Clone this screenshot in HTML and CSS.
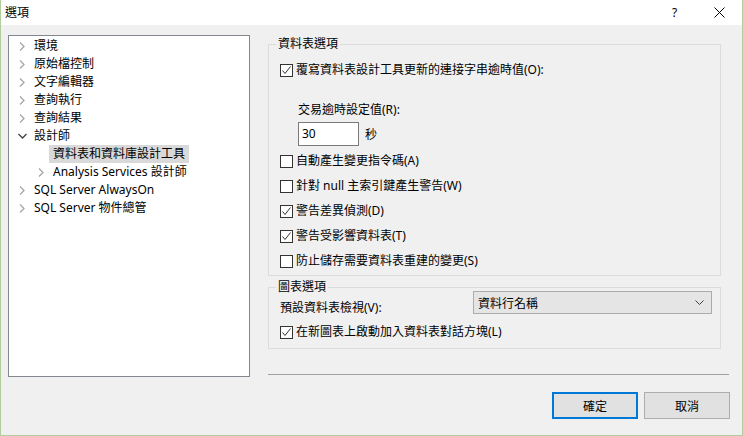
FILE: index.html
```html
<!DOCTYPE html>
<html lang="zh-Hant">
<head>
    <meta charset="UTF-8">
    <title>選項</title>
    <link rel="stylesheet" href="styles.css">
</head>
<body>
<div class="window">
    <div class="titlebar">
        <div class="title">選項</div>
        <div class="caption-btn help">?</div>
        <div class="caption-btn close">
            <svg width="11" height="11" viewBox="0 0 11 11"><path d="M0.5 0.5 L10.5 10.5 M10.5 0.5 L0.5 10.5" stroke="#000" stroke-width="1" fill="none"/></svg>
        </div>
    </div>

    <div class="main">
        <div class="tree">
            <div class="node"><span class="twisty"><svg width="6" height="9" viewBox="0 0 6 9"><path d="M1 0.5 L5 4.5 L1 8.5" stroke="#a6a6a6" stroke-width="1.3" fill="none"/></svg></span><span class="label">環境</span></div>
            <div class="node"><span class="twisty"><svg width="6" height="9" viewBox="0 0 6 9"><path d="M1 0.5 L5 4.5 L1 8.5" stroke="#a6a6a6" stroke-width="1.3" fill="none"/></svg></span><span class="label">原始檔控制</span></div>
            <div class="node"><span class="twisty"><svg width="6" height="9" viewBox="0 0 6 9"><path d="M1 0.5 L5 4.5 L1 8.5" stroke="#a6a6a6" stroke-width="1.3" fill="none"/></svg></span><span class="label">文字編輯器</span></div>
            <div class="node"><span class="twisty"><svg width="6" height="9" viewBox="0 0 6 9"><path d="M1 0.5 L5 4.5 L1 8.5" stroke="#a6a6a6" stroke-width="1.3" fill="none"/></svg></span><span class="label">查詢執行</span></div>
            <div class="node"><span class="twisty"><svg width="6" height="9" viewBox="0 0 6 9"><path d="M1 0.5 L5 4.5 L1 8.5" stroke="#a6a6a6" stroke-width="1.3" fill="none"/></svg></span><span class="label">查詢結果</span></div>
            <div class="node"><span class="twisty"><svg width="9" height="6" viewBox="0 0 9 6"><path d="M0.5 1 L4.5 5 L8.5 1" stroke="#404040" stroke-width="1.3" fill="none"/></svg></span><span class="label">設計師</span></div>
            <div class="node child"><span class="twisty"></span><span class="label selected">資料表和資料庫設計工具</span></div>
            <div class="node child"><span class="twisty"><svg width="6" height="9" viewBox="0 0 6 9"><path d="M1 0.5 L5 4.5 L1 8.5" stroke="#a6a6a6" stroke-width="1.3" fill="none"/></svg></span><span class="label">Analysis Services 設計師</span></div>
            <div class="node"><span class="twisty"><svg width="6" height="9" viewBox="0 0 6 9"><path d="M1 0.5 L5 4.5 L1 8.5" stroke="#a6a6a6" stroke-width="1.3" fill="none"/></svg></span><span class="label">SQL Server AlwaysOn</span></div>
            <div class="node"><span class="twisty"><svg width="6" height="9" viewBox="0 0 6 9"><path d="M1 0.5 L5 4.5 L1 8.5" stroke="#a6a6a6" stroke-width="1.3" fill="none"/></svg></span><span class="label">SQL Server 物件總管</span></div>
        </div>

        <div class="panel">
            <fieldset class="group group-table">
                <legend>資料表選項</legend>
                <div class="check first">
                    <span class="box checked"><svg width="11" height="11" viewBox="0 0 11 11"><path d="M1.5 5.5 L4 8.5 L9.5 1.5" stroke="#333" stroke-width="1" fill="none"/></svg></span>
                    <span>覆寫資料表設計工具更新的連接字串逾時值(O):</span>
                </div>
                <div class="timeout-label">交易逾時設定值(R):</div>
                <div class="timeout-row">
                    <div class="textbox">30</div>
                    <span class="unit">秒</span>
                </div>
                <div class="check after-input">
                    <span class="box"></span>
                    <span>自動產生變更指令碼(A)</span>
                </div>
                <div class="check">
                    <span class="box"></span>
                    <span>針對 null 主索引鍵產生警告(W)</span>
                </div>
                <div class="check">
                    <span class="box checked"><svg width="11" height="11" viewBox="0 0 11 11"><path d="M1.5 5.5 L4 8.5 L9.5 1.5" stroke="#333" stroke-width="1" fill="none"/></svg></span>
                    <span>警告差異偵測(D)</span>
                </div>
                <div class="check">
                    <span class="box checked"><svg width="11" height="11" viewBox="0 0 11 11"><path d="M1.5 5.5 L4 8.5 L9.5 1.5" stroke="#333" stroke-width="1" fill="none"/></svg></span>
                    <span>警告受影響資料表(T)</span>
                </div>
                <div class="check last">
                    <span class="box"></span>
                    <span>防止儲存需要資料表重建的變更(S)</span>
                </div>
            </fieldset>

            <fieldset class="group group-diagram">
                <legend>圖表選項</legend>
                <div class="view-row">
                    <span class="view-label">預設資料表檢視(V):</span>
                    <div class="combo">
                        <span>資料行名稱</span>
                        <svg width="9" height="5" viewBox="0 0 9 5"><path d="M0.5 0.5 L4.5 4.5 L8.5 0.5" stroke="#404040" stroke-width="1" fill="none"/></svg>
                    </div>
                </div>
                <div class="check diagram-check">
                    <span class="box checked"><svg width="11" height="11" viewBox="0 0 11 11"><path d="M1.5 5.5 L4 8.5 L9.5 1.5" stroke="#333" stroke-width="1" fill="none"/></svg></span>
                    <span>在新圖表上啟動加入資料表對話方塊(L)</span>
                </div>
            </fieldset>

            <div class="separator"></div>
        </div>
    </div>

    <div class="footer">
        <div class="button default">確定</div>
        <div class="button">取消</div>
    </div>
</div>
</body>
</html>
```

FILE: styles.css
```css
*{
    box-sizing: border-box;
}
body{
    margin: 0;
    font-family: "Segoe UI", "Noto Sans", "Noto Sans CJK TC", sans-serif;
    font-size: 12px;
    color: #000;
    background: #f0f0f0;
}
.window{
    width: 743px;
    height: 436px;
    border: 1px solid #b3cc9c;
    border-top: none;
    background: #f0f0f0;
    display: flex;
    flex-direction: column;
}
.titlebar{
    height: 25px;
    background: #fff;
    display: flex;
    align-items: center;
    flex-shrink: 0;
}
.title{
    flex: 1;
    padding-left: 4px;
    line-height: 16px;
    font-size: 12px;
}
.caption-btn{
    width: 45px;
    height: 25px;
    display: flex;
    align-items: center;
    justify-content: center;
}
.help{
    font-size: 12px;
}

/* main area */
.main{
    display: flex;
    padding: 10px 0 0 7px;
}
.tree{
    width: 242px;
    height: 342px;
    padding-top: 1px;
    background: #fff;
    border: 1px solid #828790;
    flex-shrink: 0;
}
.node{
    display: flex;
    align-items: center;
    height: 18px;
    padding-left: 5px;
}
.node.child{
    padding-left: 24px;
}
.twisty{
    width: 16px;
    height: 18px;
    display: flex;
    align-items: center;
    justify-content: center;
}
.label{
    padding: 0 4px;
    line-height: 18px;
    white-space: nowrap;
}
.label.selected{
    background: #d9d9d9;
    width: 140px;
}

/* right side */
.panel{
    margin-left: 18px;
    width: 461px;
    display: flex;
    flex-direction: column;
}
.group{
    margin: 0 8px 0 0;
    padding: 0 8px 0 11px;
    border: 1px solid #dcdcdc;
    min-width: 0;
}
.group legend{
    margin-left: -4px;
    padding: 0 2px;
    line-height: 16px;
}
.group-table{
    margin-top: 1px;
    padding-bottom: 6px;
}
.group-diagram{
    margin-top: 3px;
    padding-bottom: 8px;
}
.check{
    display: flex;
    align-items: center;
    height: 16px;
    line-height: 16px;
    margin-top: 9px;
    white-space: nowrap;
}
.check.first{
    margin-top: 10px;
}
.check.after-input{
    margin-top: 7px;
}
.box{
    width: 13px;
    height: 13px;
    border: 1px solid #333;
    background: #fff;
    margin-right: 3px;
    display: flex;
    align-items: center;
    justify-content: center;
    flex-shrink: 0;
}
.timeout-label{
    margin: 24px 0 0 18px;
    line-height: 16px;
}
.timeout-row{
    display: flex;
    align-items: center;
    margin: 4px 0 0 18px;
}
.textbox{
    width: 61px;
    height: 24px;
    border: 1px solid #7a7a7a;
    background: #fff;
    padding-left: 3px;
    line-height: 22px;
}
.unit{
    margin-left: 6px;
}
.view-row{
    display: flex;
    align-items: flex-start;
    margin-top: -4px;
}
.view-label{
    padding-top: 9px;
    line-height: 16px;
}
.combo{
    margin-left: auto;
    width: 239px;
    height: 23px;
    background: #e5e5e5;
    border: 1px solid #acacac;
    display: flex;
    align-items: center;
    justify-content: space-between;
    padding: 0 7px 0 4px;
}
.check.diagram-check{
    margin-top: 8px;
}
.separator{
    margin-top: auto;
    margin-bottom: 2px;
    height: 1px;
    background: #a0a0a0;
}

/* buttons */
.footer{
    display: flex;
    justify-content: flex-end;
    gap: 6px;
    padding: 15px 12px 0 0;
}
.button{
    width: 86px;
    height: 27px;
    background: #e1e1e1;
    border: 1px solid #adadad;
    display: flex;
    align-items: center;
    justify-content: center;
}
.button.default{
    border: 2px solid #0078d7;
}
```
